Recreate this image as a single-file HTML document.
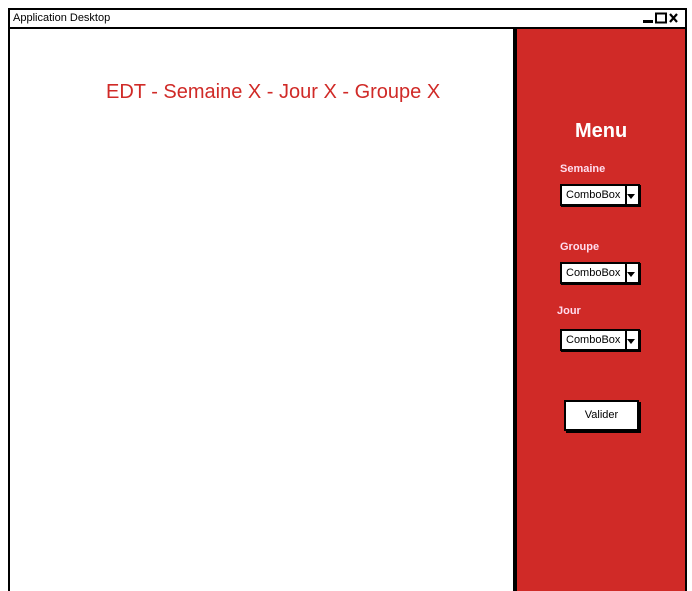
<!DOCTYPE html>
<html><head><style>
*{margin:0;padding:0;box-sizing:border-box}
html,body{width:692px;height:591px;overflow:hidden}
body{background:#fff;position:relative;font-family:"Liberation Sans",sans-serif}
.frame{position:absolute;left:8px;top:8px;width:679px;height:583px;border:2px solid #000;border-bottom:none;background:#fff;overflow:hidden}
.title{position:absolute;left:0;top:0;right:0;height:19px;border-bottom:2px solid #000;font-size:11px;padding:2px 3px}
.div{position:absolute;left:503px;top:19px;width:4px;height:570px;background:#000}
.red{position:absolute;left:507px;top:19px;width:168px;height:570px;background:#d02a27}
.h{position:absolute;left:96px;top:71px;color:#d02a27;font-size:20px}
.lbl{position:absolute;color:#fde;font-size:11px;font-weight:bold}
.cb{position:absolute;width:80px;height:22px;border:2px solid #000;background:#fff;font-size:11px;padding:3px 4px;box-shadow:1px 1px 0 #000}
.cb:after{content:"";position:absolute;left:63px;top:0;width:2px;height:18px;background:#000}
.cb i{position:absolute;right:3px;top:8px;border:4px solid transparent;border-top:5px solid #000}
.btn{position:absolute;left:564px;top:400px;width:75px;height:31px;border:2px solid #000;background:#fff;font-size:11px;text-align:center;line-height:27px;box-shadow:2px 2px 0 #000}
</style></head><body>
<div class="frame">
<div class="title">Application Desktop</div>
<div class="div"></div><div class="red"></div>
<div class="h">EDT - Semaine X - Jour X - Groupe X</div>
</div>
<svg style="position:absolute;left:642px;top:12px" width="38" height="12">
<rect x="1" y="8" width="10" height="3" fill="#000"/>
<rect x="14" y="1.5" width="10" height="9" fill="none" stroke="#000" stroke-width="2"/>
<path d="M28 2L35 10M35 2L28 10" stroke="#000" stroke-width="2.2"/>
</svg>
<div style="position:absolute;left:575px;top:120px;color:#fff;font-size:20px;font-weight:bold">Menu</div>
<div class="lbl" style="left:560px;top:163px">Semaine</div>
<div class="cb" style="left:560px;top:184px">ComboBox<i></i></div>
<div class="lbl" style="left:560px;top:241px">Groupe</div>
<div class="cb" style="left:560px;top:262px">ComboBox<i></i></div>
<div class="lbl" style="left:557px;top:305px">Jour</div>
<div class="cb" style="left:560px;top:329px">ComboBox<i></i></div>
<div class="btn">Valider</div>
</body></html>
